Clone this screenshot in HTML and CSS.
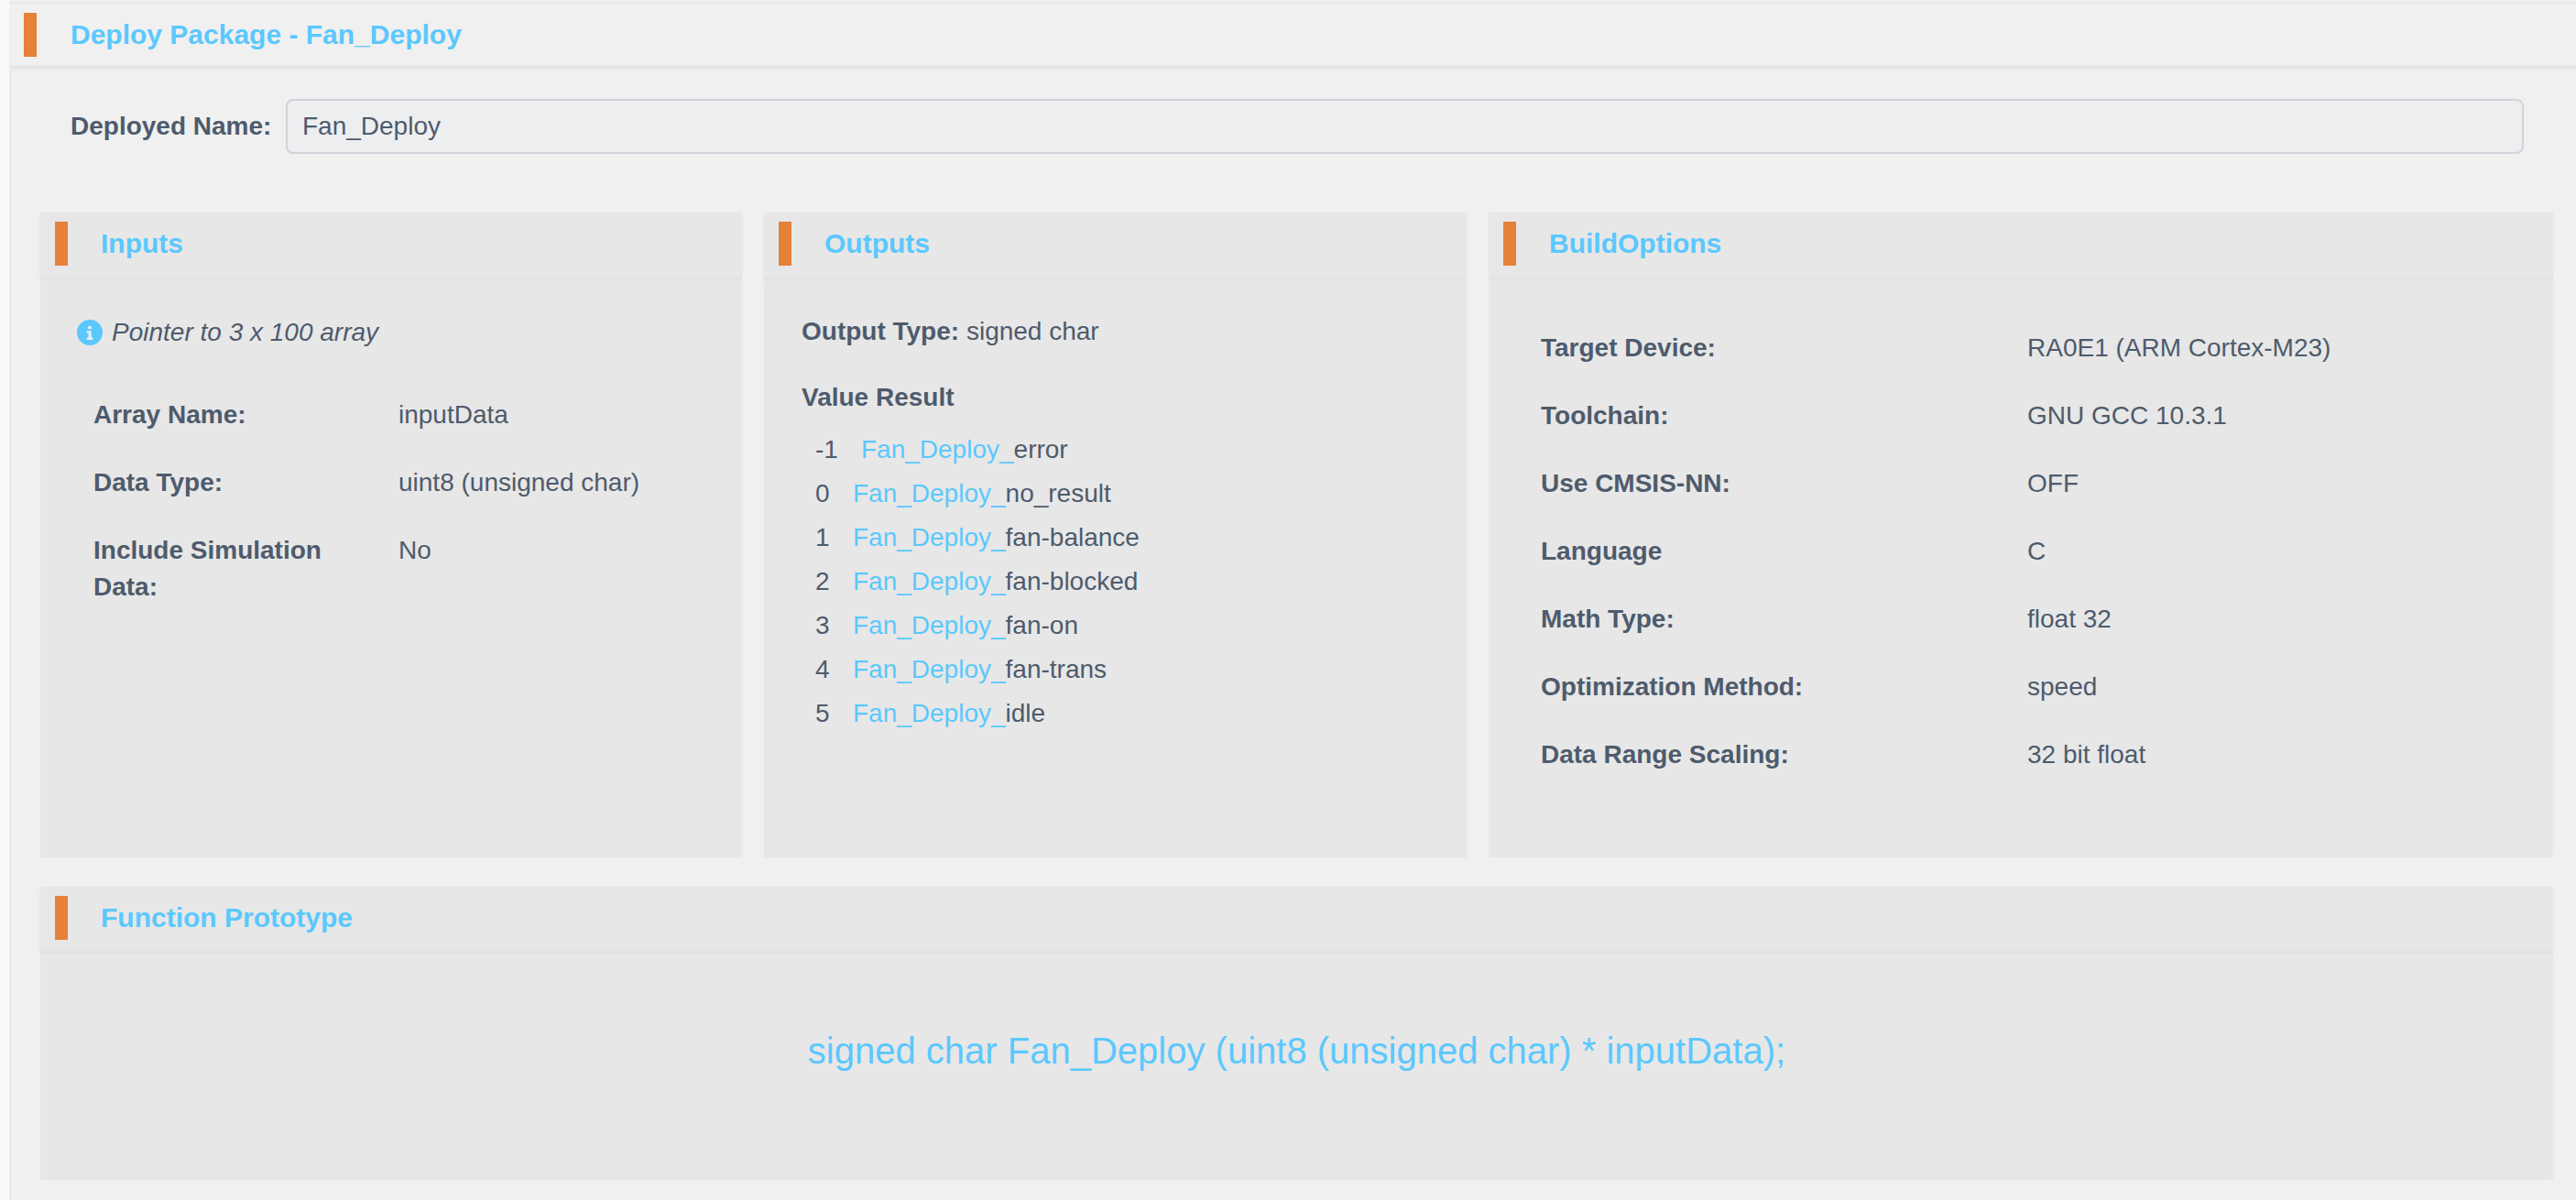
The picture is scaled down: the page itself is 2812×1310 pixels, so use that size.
FILE: index.html
```html
<!DOCTYPE html>
<html lang="en">
<head>
<meta charset="utf-8">
<title>Deploy Package - Fan_Deploy</title>
<link rel="stylesheet" href="styles.css">
</head>
<body>
<main class="page">
  <header class="page-head">
    <span class="mark"></span>
    <h1 class="head-title">Deploy Package - Fan_Deploy</h1>
  </header>
  <section class="page-body">
    <div class="name-row">
      <label class="strong name-label" for="dn">Deployed Name:</label>
      <input class="name-input" id="dn" value="Fan_Deploy" readonly>
    </div>
    <div class="cards">
      <article class="card">
        <div class="card-head"><span class="mark"></span><h2 class="card-title">Inputs</h2></div>
        <div class="card-body inputs-body">
          <p class="note">
            <svg class="info" viewBox="0 0 28 28" aria-hidden="true"><circle cx="14" cy="14" r="14" fill="#5bc8fd"/><path d="M12.2 7h3.6v3.2h-3.6zM10.8 12.2h5v7.2h1.6V22h-6.6v-2.6h1.7v-4.6h-1.7z" fill="#e8eef2"/></svg>
            <em>Pointer to 3 x 100 array</em>
          </p>
          <dl class="kv kv-inputs">
            <dt class="strong">Array Name:</dt><dd>inputData</dd>
            <dt class="strong">Data Type:</dt><dd>uint8 (unsigned char)</dd>
            <dt class="strong">Include Simulation Data:</dt><dd>No</dd>
          </dl>
        </div>
      </article>
      <article class="card">
        <div class="card-head"><span class="mark"></span><h2 class="card-title">Outputs</h2></div>
        <div class="card-body outputs-body">
          <p class="out-type"><b class="strong">Output Type:</b> signed char</p>
          <p class="strong out-head">Value Result</p>
          <ul class="results">
            <li><span class="num wide">-1</span><span class="blue">Fan_Deploy_</span>error</li>
            <li><span class="num">0</span><span class="blue">Fan_Deploy_</span>no_result</li>
            <li><span class="num">1</span><span class="blue">Fan_Deploy_</span>fan-balance</li>
            <li><span class="num">2</span><span class="blue">Fan_Deploy_</span>fan-blocked</li>
            <li><span class="num">3</span><span class="blue">Fan_Deploy_</span>fan-on</li>
            <li><span class="num">4</span><span class="blue">Fan_Deploy_</span>fan-trans</li>
            <li><span class="num">5</span><span class="blue">Fan_Deploy_</span>idle</li>
          </ul>
        </div>
      </article>
      <article class="card">
        <div class="card-head"><span class="mark"></span><h2 class="card-title">BuildOptions</h2></div>
        <div class="card-body build-body">
          <dl class="kv kv-build">
            <dt class="strong">Target Device:</dt><dd>RA0E1 (ARM Cortex-M23)</dd>
            <dt class="strong">Toolchain:</dt><dd>GNU GCC 10.3.1</dd>
            <dt class="strong">Use CMSIS-NN:</dt><dd>OFF</dd>
            <dt class="strong">Language</dt><dd>C</dd>
            <dt class="strong">Math Type:</dt><dd>float 32</dd>
            <dt class="strong">Optimization Method:</dt><dd>speed</dd>
            <dt class="strong">Data Range Scaling:</dt><dd>32 bit float</dd>
          </dl>
        </div>
      </article>
    </div>
    <article class="card proto">
      <div class="card-head"><span class="mark"></span><h2 class="card-title">Function Prototype</h2></div>
      <div class="proto-body">signed char Fan_Deploy (uint8 (unsigned char) * inputData);</div>
    </article>
  </section>
</main>
</body>
</html>
```
FILE: styles.css
```css
* { box-sizing: border-box; }
html, body { margin: 0; padding: 0; height: 100%; }
body {
  background: #fafafa;
  color: #4e5b6c;
  font-family: "Liberation Sans", Arial, sans-serif;
  font-size: 28px;
  line-height: 40px;
  overflow: hidden;
}
.page {
  margin-left: 10px;
  height: 1310px;
  background: #f0f0f0;
  padding-top: 2px;
}
.page-head {
  height: 72px;
  border-top: 2px solid #e6e6ec;
  border-bottom: 2px solid #e2e2e8;
  display: flex;
  align-items: center;
  padding-left: 16px;
}
.mark {
  display: block;
  width: 14px;
  height: 48px;
  background: #e58139;
  flex: none;
}
.head-title {
  margin: 0 0 0 37px;
  color: #5bc8fd;
  font-size: 30px;
  font-weight: 700;
}
.page-body {
  height: 1236px;
  padding: 32px 25px 0 32px;
  border-left: 2px solid #e8e8ec;
  border-top: 2px solid #e8e8ec;
  border-top-left-radius: 8px;
}
.strong { font-weight: 700; color: #4e5b6c; }
.name-row {
  display: flex;
  align-items: center;
  padding-left: 33px;
  padding-right: 32px;
  height: 60px;
}
.name-label { width: 235px; flex: none; }
.name-input {
  flex: 1;
  height: 60px;
  padding: 0 16px;
  border: 2px solid #d0d3da;
  border-radius: 8px;
  background: #edeef0;
  color: #4e5b6c;
  font: inherit;
  outline: none;
}
.cards {
  display: grid;
  grid-template-columns: 766px 767px 1fr;
  column-gap: 24px;
  margin-top: 64px;
}
.card { background: #e7e7e7; height: 704px; box-shadow: 0 0 4px rgba(0, 0, 0, 0.02); }
.card-head {
  height: 72px;
  padding: 10px 0 0 16px;
  border-bottom: 2px solid #e2e2e6;
  box-shadow: 0 1px 3px rgba(0, 0, 0, 0.03);
  display: flex;
  align-items: flex-start;
}
.card-title {
  margin: 0 0 0 36px;
  color: #5bc8fd;
  font-size: 30px;
  line-height: 48px;
  font-weight: 700;
}
.card-body { padding: 0; }
.note {
  margin: 0;
  padding: 20px 0 0 40px;
  display: flex;
  align-items: center;
  gap: 10px;
  height: 78px;
  box-sizing: content-box;
}
.info { width: 28px; height: 28px; flex: none; }
.kv { margin: 0; display: grid; }
.kv dd { margin: 0; }
.kv-inputs {
  grid-template-columns: 333px 1fr;
  row-gap: 34px;
  padding: 0 40px 0 58px;
  margin-top: 31px;
}
.kv-inputs dt { max-width: 300px; }
.kv-build {
  grid-template-columns: 531px 1fr;
  row-gap: 34px;
  padding: 56px 40px 0 57px;
}
.outputs-body { padding: 38px 0 0 41px; }
.outputs-body p { margin: 0; }
.out-type { height: 40px; }
.out-head { margin-top: 32px !important; }
.results { list-style: none; margin: 13px 0 0; padding: 0 0 0 15px; }
.results li { height: 48px; line-height: 48px; }
.num { display: inline-block; min-width: 41px; }
.num.wide { min-width: 50px; }
.blue { color: #5bc8fd; }
.proto { height: 320px; margin-top: 32px; }
.proto-body {
  height: 248px;
  display: flex;
  align-items: center;
  justify-content: center;
  color: #5bc8fd;
  font-size: 40px;
  padding-bottom: 34px;
}
```
